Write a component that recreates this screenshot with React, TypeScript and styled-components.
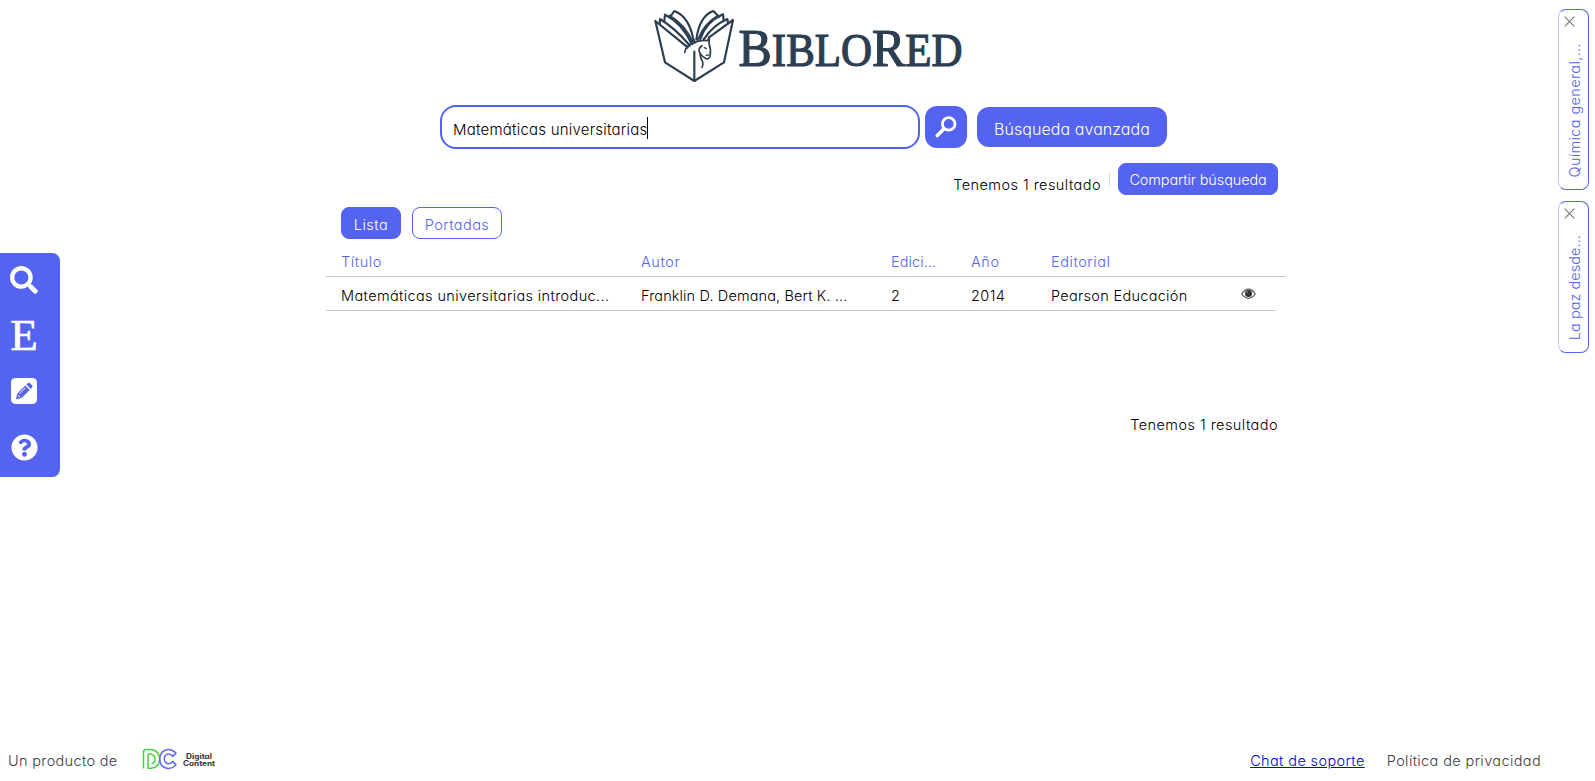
import React from 'react';
import styled, { createGlobalStyle } from 'styled-components';
import { FaSearch, FaQuestionCircle } from 'react-icons/fa';

const BLUE = '#5463f0';
const NAVY = '#2c3e50';

const GlobalStyle = createGlobalStyle`
  * { box-sizing: border-box; }
  body {
    margin: 0;
    background: #fff;
    color: #000;
    font-family: Inter, "Liberation Sans", sans-serif;
    font-feature-settings: "cv11";
    font-size: 14.5px;
    font-weight: 300;
  }
  button, input { font: inherit; font-feature-settings: inherit; }
`;

const Page = styled.div`
  height: 781px;
  display: flex;
  flex-direction: column;
  overflow: hidden;
`;

const Body = styled.div`
  flex: 1;
  display: grid;
  grid-template-columns: 326px 960px 1fr;
`;

const Label = styled.span<{ $track?: number }>`
  letter-spacing: ${(p) => p.$track ?? 0.4}px;
  white-space: pre;
`;

const ToolRail = styled.nav`
  width: 60px;
  height: 224px;
  margin-top: 253px;
  padding: 0 0 0 10px;
  background: ${BLUE};
  border-radius: 0 8px 8px 0;
  color: #fff;
  display: grid;
  grid-template-rows: 54px repeat(3, 56px);
`;

const Tool = styled.a`
  width: 28px;
  display: flex;
  align-items: center;
  justify-content: center;
  svg { display: block; }
`;

const EncyclopediaLetter = styled.span`
  font: 400 45px/56px "Liberation Serif", serif;
  -webkit-text-stroke: 0.7px #fff;
`;

const Main = styled.main`
  display: flex;
  flex-direction: column;
`;

const Logo = styled.svg`
  display: block;
  margin-left: 314px;
  flex: none;
`;

const SearchBar = styled.form`
  margin-top: 10px;
  padding-left: 114px;
  height: 44px;
  display: flex;
  align-items: center;
`;

const SearchField = styled.div`
  width: 480px;
  height: 44px;
  padding: 4px 0 0 11px;
  border: 2px solid ${BLUE};
  border-radius: 16px;
  display: flex;
  align-items: center;
  font-size: 15px;
`;

const Caret = styled.i`
  width: 1px;
  height: 22px;
  margin: -3px 0 0 -1px;
  background: #000;
`;

const IconButton = styled.button`
  width: 42px;
  height: 42px;
  margin-left: 5px;
  padding: 0;
  border: 0;
  border-radius: 12px;
  background: ${BLUE};
  display: flex;
  align-items: center;
  justify-content: center;
`;

const AdvancedButton = styled.button`
  width: 190px;
  height: 40px;
  margin-left: 10px;
  padding: 3px 0 0;
  border: 0;
  border-radius: 12px;
  background: ${BLUE};
  color: #fff;
  font-size: 16px;
`;

const ResultBar = styled.div`
  height: 32px;
  margin-top: 14px;
  padding-right: 8px;
  display: flex;
  justify-content: flex-end;
`;

const ResultCount = styled.div`
  padding-top: 11px;
  line-height: 21px;
`;

const Divider = styled.i`
  width: 1px;
  height: 14px;
  margin: 9px 8px 0;
  background: #dcdcdc;
`;

const SmallButton = styled.button<{ $width: number; $outline?: boolean; $drop?: number }>`
  width: ${(p) => p.$width}px;
  height: 32px;
  padding: ${(p) => p.$drop ?? 3}px 0 0;
  border: 1px solid ${BLUE};
  border-radius: 8px;
  background: ${(p) => (p.$outline ? '#fff' : BLUE)};
  color: ${(p) => (p.$outline ? BLUE : '#fff')};
  font-weight: ${(p) => (p.$outline ? 300 : 350)};
`;

const ViewToggle = styled.div`
  margin-top: 12px;
  padding-left: 15px;
  display: flex;
  gap: 11px;
`;

const TableRow = styled.div`
  width: 950px;
  height: 34px;
  padding: 4px 0 0 15px;
  border-bottom: 1px solid #c8c8c8;
  display: grid;
  grid-template-columns: 300px 250px 80px 80px 190px 1fr;
  align-items: center;
`;

const TableHead = styled(TableRow)`
  width: 960px;
  height: 38px;
  padding-top: 8px;
  color: ${BLUE};
`;

const ViewCell = styled.div`
  display: flex;
  padding-bottom: 3px;
`;

const BottomCount = styled.div`
  margin-top: 104px;
  padding-right: 8px;
  line-height: 20px;
  text-align: right;
`;

const SavedTabs = styled.aside`
  justify-self: end;
  width: 31px;
  margin: 9px 6px 0 0;
  display: flex;
  flex-direction: column;
  gap: 11px;
`;

const SavedTab = styled.div<{ $height: number }>`
  height: ${(p) => p.$height}px;
  border: 1px solid ${BLUE};
  border-left-color: #c3c8fa;
  border-radius: 8px;
  padding: 6px 0 12px 5px;
  display: flex;
  flex-direction: column;
  justify-content: space-between;
  color: ${BLUE};
`;

const VerticalText = styled.div`
  writing-mode: vertical-rl;
  transform: rotate(180deg);
  width: 22px;
  line-height: 22px;
`;

const Footer = styled.footer`
  height: 42px;
  padding: 0 54px 0 8px;
  display: flex;
  align-items: center;
  color: #3b4148;
`;

const Credit = styled.div`
  width: 134px;
`;

const Links = styled.div`
  margin-left: auto;
  display: flex;
  gap: 22px;
`;

const ChatLink = styled.a`
  color: #0000ee;
  text-decoration: underline;
  text-underline-offset: 1px;
`;

const Brand = styled.svg`
  display: block;
  margin-bottom: 2px;
`;

function BibloRedLogo() {
  return (
    <Logo width="340" height="95" viewBox="0 0 340 95">
      <g
        transform="translate(5 0) scale(.33333)"
        fill="none"
        stroke={NAVY}
        strokeWidth="6.5"
        strokeLinecap="round"
        strokeLinejoin="round"
      >
        <path d="M128 142 L31 63 L60 187 L148 243 L237 187 L264 60 L192 112" />
        <path d="M148 243 V155" />
        <path d="M44 72 L45 57 Q92 86 133 135" />
        <path d="M58 62 L60 44 Q112 70 139 130" />
        <path d="M76 50 L88 33 Q134 50 146 124" />
        <path d="M74 47 Q122 77 143 127" />
        <path d="M249 69 L247 57 Q204 76 178 116" />
        <path d="M236 60 L234 43 Q183 66 166 116" />
        <path d="M222 50 L205 33 Q164 47 154 118" />
        <path d="M218 48 Q176 74 161 116" />
        <path
          d="M119 157 Q122 141 138 133 Q162 118 187 122 L193 113 L192 130 Q199 150 195 170 Q189 180 181 175 Q168 168 163 156 Q160 143 171 137 M164 157 Q166 174 173 186 Q175 194 171 202"
          strokeWidth="5"
        />
        <path
          d="M128 144 l-3 -7 m10 2 l-3 -8 m11 3 l-3 -9 m11 4 l-3 -9 m11 5 l-2 -9 m10 7 l-2 -9 m11 8 l-1 -7 M178 143 l6 3 M184 166 l6 -1"
          strokeWidth="4"
        />
      </g>
      <text
        x="98.5"
        y="65.7"
        fill={NAVY}
        stroke={NAVY}
        strokeWidth="1.2"
        fontFamily="Liberation Serif, serif"
        fontSize="53"
        textLength="224"
        lengthAdjust="spacingAndGlyphs"
      >
        B<tspan fontSize="45.5">IBLO</tspan>R<tspan fontSize="45.5">ED</tspan>
      </text>
    </Logo>
  );
}

function EyeIcon() {
  return (
    <svg width="15" height="12" viewBox="0 0 15 12">
      <path d="M.7 6 Q4 1.2 7.5 1.2 Q11 1.2 14.3 6 Q11 10.3 7.5 10.3 Q4 10.3 .7 6Z" fill="#fff" stroke="#555" strokeWidth="1.2" />
      <circle cx="7.5" cy="5.4" r="3.5" fill="#333" />
      <circle cx="6.3" cy="4.3" r=".8" fill="#999" />
    </svg>
  );
}

function CloseIcon() {
  return (
    <svg width="11" height="11" viewBox="0 0 11 11" stroke="#777" strokeWidth="1.1">
      <path d="M.7 .7 L10.3 10.3 M10.3 .7 L.7 10.3" />
    </svg>
  );
}

function PencilSquareIcon() {
  return (
    <svg width="26" height="26" viewBox="0 0 26 26">
      <rect width="26" height="26" rx="4.5" fill="#fff" />
      <path d="M5 21.3 L6.2 15.8 L14.4 7.6 L18.7 11.9 L10.5 20.1 Z M15.4 6.6 L17 5 Q18 4.3 19 5.2 L21.1 7.3 Q22 8.3 21.2 9.3 L19.7 10.9 Z" fill={BLUE} />
      <path d="M8.5 15.8 L14.6 9.7 M7 17.2 L9.2 19.2" stroke="#fff" strokeWidth="1" />
    </svg>
  );
}

function DigitalContentLogo() {
  return (
    <Brand width="76" height="22" viewBox="0 0 76 22">
      <g fill="none" strokeWidth="1.5" strokeLinejoin="round">
        <path d="M1.5 20.5 V4 Q1.5 1.5 4 1.5 H9 Q17.5 2.5 17.5 11 Q17.5 19.5 9 20.3 H6 V7 Q6 6 7 6 H8.5 Q13 7 13 11 Q13 15 9.5 15.8" stroke="#46cf3c" />
        <path d="M34 5.3 Q30.5 1.4 26 1.5 Q18 2.5 17.8 11 Q18 19.5 26 20.4 Q31 20.5 34 16.6 L30.8 13.6 Q28.8 16 26 15.8 Q22.4 15 22.3 11 Q22.4 6.8 26 6 Q28.8 5.8 30.8 8.4 Z" stroke="#5b68f2" />
      </g>
      <g fill="#333" fontFamily="Inter, sans-serif" fontWeight="700" fontSize="7.3">
        <text x="44" y="10.8" textLength="26" lengthAdjust="spacingAndGlyphs">Digital</text>
        <text x="41" y="17.6" textLength="32" lengthAdjust="spacingAndGlyphs">Content</text>
      </g>
    </Brand>
  );
}

export default function App() {
  return (
    <Page>
      <GlobalStyle />
      <Body>
        <ToolRail>
          <Tool><FaSearch size={28} /></Tool>
          <Tool><EncyclopediaLetter>E</EncyclopediaLetter></Tool>
          <Tool><PencilSquareIcon /></Tool>
          <Tool><FaQuestionCircle size={27} /></Tool>
        </ToolRail>

        <Main>
          <BibloRedLogo />
          <SearchBar>
            <SearchField>
              <Label $track={0.22}>Matemáticas universitarias</Label>
              <Caret />
            </SearchField>
            <IconButton type="button">
              <svg width="22" height="22" viewBox="0 0 22 22" fill="none" stroke="#fff">
                <circle cx="13.7" cy="7.9" r="6.3" strokeWidth="2.8" />
                <path d="M9 12.8 L2.3 19.5" strokeWidth="3.6" strokeLinecap="round" />
              </svg>
            </IconButton>
            <AdvancedButton type="button"><Label $track={0.07}>Búsqueda avanzada</Label></AdvancedButton>
          </SearchBar>

          <ResultBar>
            <ResultCount><Label $track={0.45}>Tenemos 1 resultado</Label></ResultCount>
            <Divider />
            <SmallButton $width={160} $drop={1}><Label $track={-0.13}>Compartir búsqueda</Label></SmallButton>
          </ResultBar>

          <ViewToggle>
            <SmallButton $width={60}><Label $track={0.5}>Lista</Label></SmallButton>
            <SmallButton $width={90} $outline><Label $track={0.44}>Portadas</Label></SmallButton>
          </ViewToggle>

          <TableHead>
            <Label $track={0.59}>Título</Label>
            <Label $track={0.6}>Autor</Label>
            <Label $track={0.1}>Edici...</Label>
            <Label $track={0.6}>Año</Label>
            <Label $track={0.55}>Editorial</Label>
          </TableHead>
          <TableRow>
            <Label $track={0.38}>Matemáticas universitarias introduc...</Label>
            <Label $track={0.13}>Franklin D. Demana, Bert K. ...</Label>
            <Label $track={0.4}>2</Label>
            <Label $track={0.4}>2014</Label>
            <Label $track={0.3}>Pearson Educación</Label>
            <ViewCell><EyeIcon /></ViewCell>
          </TableRow>

          <BottomCount><Label $track={0.45}>Tenemos 1 resultado</Label></BottomCount>
        </Main>

        <SavedTabs>
          <SavedTab $height={181}>
            <CloseIcon />
            <VerticalText><Label $track={0.37}>Química general,...</Label></VerticalText>
          </SavedTab>
          <SavedTab $height={152}>
            <CloseIcon />
            <VerticalText><Label $track={0.05}>La paz desde...</Label></VerticalText>
          </SavedTab>
        </SavedTabs>
      </Body>

      <Footer>
        <Credit><Label $track={0.33}>Un producto de</Label></Credit>
        <DigitalContentLogo />
        <Links>
          <ChatLink><Label $track={0.38}>Chat de soporte</Label></ChatLink>
          <Label $track={0.38}>Política de privacidad</Label>
        </Links>
      </Footer>
    </Page>
  );
}
